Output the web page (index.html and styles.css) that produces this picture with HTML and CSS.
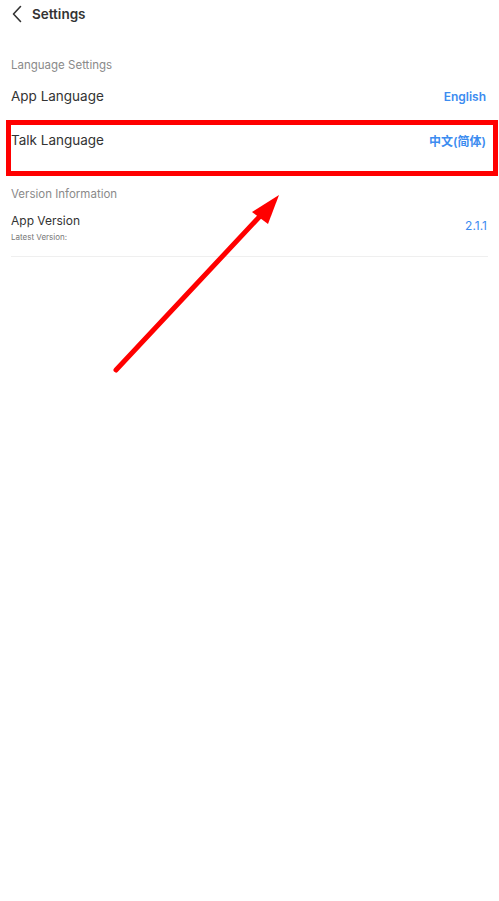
FILE: index.html
```html
<!DOCTYPE html>
<html>
<head>
<meta charset="utf-8">
<link rel="stylesheet" href="styles.css">
</head>
<body>
<div class="page">
  <header class="topbar">
    <svg class="back" width="12" height="18" viewBox="0 0 12 18"><path d="M9.5 1.5 L2.5 9 L9.5 16.5" fill="none" stroke="#333" stroke-width="1.6" stroke-linecap="round" stroke-linejoin="round"/></svg>
    <span class="title">Settings</span>
  </header>
  <section class="group">
    <div class="group-title">Language Settings</div>
    <div class="row">
      <span class="label">App Language</span>
      <span class="value">English</span>
    </div>
    <div class="row">
      <span class="label">Talk Language</span>
      <span class="value">中文(简体)</span>
    </div>
  </section>
  <section class="group version">
    <div class="group-title">Version Information</div>
    <div class="version-row">
      <div class="vtexts">
        <span class="vlabel">App Version</span>
        <span class="sub">Latest Version:</span>
      </div>
      <span class="vvalue">2.1.1</span>
    </div>
  </section>
</div>
<div class="highlight"></div>
<svg class="arrow" width="499" height="901" viewBox="0 0 499 901">
  <line x1="116" y1="370" x2="262" y2="214" stroke="#ff0000" stroke-width="5" stroke-linecap="round"/>
  <polygon points="279,195 252,212 268,224" fill="#ff0000"/>
</svg>
</body>
</html>
```

FILE: styles.css
```css
html, body {
  margin: 0;
  padding: 0;
  background: #fff;
}
body {
  width: 499px;
  height: 901px;
  position: relative;
  font-family: Inter, "Noto Sans CJK SC", sans-serif;
  color: #333;
  overflow: hidden;
}
.page {
  display: flex;
  flex-direction: column;
}
.topbar {
  display: flex;
  align-items: center;
  height: 28px;
  padding-left: 11px;
  gap: 9px;
}
.back {
  display: block;
}
.title {
  font-size: 13.5px;
  font-weight: 600;
  color: #333;
}
.group {
  display: flex;
  flex-direction: column;
  padding: 0 11px;
}
.group-title {
  font-size: 11.5px;
  color: #8a8a8a;
  margin-top: 29px;
  height: 16px;
  line-height: 16px;
}
.row {
  display: flex;
  justify-content: space-between;
  align-items: center;
  height: 44px;
  padding-top: 2px;
  box-sizing: border-box;
  padding-right: 2px;
}
.label {
  font-size: 13.5px;
  color: #333;
}
.value {
  font-size: 12px;
  font-weight: 600;
  color: #3c8cf0;
}
.version .group-title {
  margin-top: 25px;
}
.version-row {
  display: flex;
  justify-content: space-between;
  align-items: flex-start;
  margin-top: 11px;
  padding-bottom: 13px;
  border-bottom: 1px solid #efefef;
}
.vtexts {
  display: flex;
  flex-direction: column;
}
.vlabel {
  font-size: 12px;
  line-height: 16px;
  color: #333;
}
.sub {
  font-size: 8px;
  color: #777;
  line-height: 11px;
  margin-top: 3px;
}
.vvalue {
  font-size: 12px;
  line-height: 16px;
  color: #3c8cf0;
  margin-top: 5px;
  margin-right: 1px;
}
.highlight {
  position: absolute;
  left: 6px;
  top: 120px;
  width: 482px;
  height: 46px;
  border: 5px solid #ff0000;
}
.arrow {
  position: absolute;
  left: 0;
  top: 0;
  pointer-events: none;
}
```
